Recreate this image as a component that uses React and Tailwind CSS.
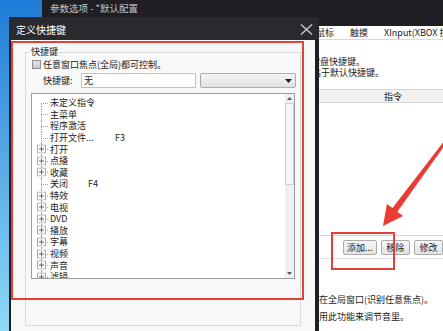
import React from "react";

/* 定义快捷键 对话框，叠在 "参数选项" 窗口上 */
const TREE = [
  { t: "未定义指令" },
  { t: "主菜单" },
  { t: "程序激活" },
  { t: "打开文件...", k: "F3", w: "w-[65px]" },
  { t: "打开", c: true },
  { t: "点播", c: true },
  { t: "收藏", c: true },
  { t: "关闭", k: "F4", w: "w-[38px]" },
  { t: "特效", c: true },
  { t: "电视", c: true },
  { t: "DVD", c: true },
  { t: "播放", c: true },
  { t: "字幕", c: true },
  { t: "视频", c: true },
  { t: "声音", c: true },
  { t: "滤镜", c: true },
];

function PlusBox() {
  return (
    <svg width="9" height="9" viewBox="0 0 9 9" className="absolute left-[5px] top-1/2 -translate-y-1/2">
      <rect x="0.5" y="0.5" width="8" height="8" fill="#fff" stroke="#a8a8a8" />
      <path d="M2 4.5h5M4.5 2v5" stroke="#666" />
    </svg>
  );
}

function WinButton({ children, w }) {
  return (
    <div
      className={`${w} h-[15px] flex items-center justify-center rounded-[2px] border border-[#acacac] bg-linear-to-b from-[#f7f7f7] to-[#e3e3e3] text-[9px] leading-none text-[#222]`}
    >
      {children}
    </div>
  );
}

export default function App() {
  return (
    <div className="relative w-[443px] h-[331px] overflow-hidden bg-linear-to-b from-[#1c7cd6] to-[#8fd9f6] font-['Noto_Sans_CJK_SC',sans-serif]">
      {/* 背后的 参数选项 窗口 */}
      <div className="absolute left-[42px] top-0 right-0 bottom-0 flex flex-col">
        <div className="h-[26px] bg-[#1e1e23] pl-[8px] pt-[2px] text-[9.5px] leading-[12px] text-[#c4c4c4]">
          参数选项 - *默认配置
        </div>
        <div className="flex-1 bg-white flex flex-col text-[9px] text-[#1a1a1a]">
          <div className="h-[14px] flex items-center gap-[16px] pl-[274px] border-b border-[#d9d9d9] leading-none whitespace-nowrap">
            <span>鼠标</span>
            <span>触摸</span>
            <span>XInput(XBOX 控制器)</span>
          </div>
          <div className="pt-[16px] leading-[11px] whitespace-nowrap">
            <p className="pl-[224px]">可以自定义键盘快捷键。</p>
            <p className="pl-[180px]">自定义的快捷键优先级高于默认快捷键。</p>
          </div>
          <div className="mt-[11px] h-[14px] bg-[#f1f1f1] border-y border-[#d6d6d6] flex items-center pl-[342px] leading-none">
            指令
          </div>
          <div className="h-[133px] border-b border-[#d8d8d8]" />
          <div className="h-[23px] flex items-center gap-[4px] pl-[301px] border-b border-[#e2e2e2]">
            <WinButton w="w-[44px]">添加...</WinButton>
            <WinButton w="w-[38px]">移除</WinButton>
            <WinButton w="w-[38px]">修改</WinButton>
          </div>
          <div className="pt-[32px] leading-[17px] whitespace-nowrap pl-[268px]">
            <p>仅在全局窗口(识别任意焦点)。</p>
            <p>启用此功能来调节音里。</p>
          </div>
        </div>
      </div>

      {/* 定义快捷键 对话框 */}
      <div className="absolute left-[9px] top-[17px] bottom-0 w-[310px] flex flex-col">
        <div className="h-[23px] bg-[#29292e] flex items-center justify-between pl-[7px] pr-[6px] pt-[2px]">
          <span className="text-[10px] leading-none text-white">定义快捷键</span>
          <svg width="13" height="11" viewBox="0 0 13 11">
            <path d="M1 0.5L12 10.5M12 0.5L1 10.5" stroke="#cfcfcf" strokeWidth="1.3" />
          </svg>
        </div>
        <div className="flex-1 bg-[#f8f8f8] border-l-2 border-r-4 border-[#1d1d22] text-[9px] text-[#1a1a1a]">
          <fieldset className="ml-[14px] mt-[6px] w-[276px] h-[280px] min-w-0 border border-[#dadada]">
            <legend className="ml-[4px] px-[1px] leading-[12px]">快捷键</legend>
            <div className="h-[12px] flex items-center pl-[6px]">
              <span className="w-[9px] h-[9px] border border-[#8f8f8f] bg-linear-to-b from-[#e2e2e2] to-[#c9c9c9]" />
              <span className="ml-[2px] leading-none">任意窗口焦点(全局)都可控制。</span>
            </div>
            <div className="mt-[3px] h-[15px] flex items-center pl-[17px]">
              <span className="w-[38px] leading-none">快捷键:</span>
              <div className="w-[115px] h-full bg-white border border-[#c4c4c4] flex items-center pl-[2px] leading-none">
                无
              </div>
              <div className="ml-[4px] w-[96px] h-full rounded-[2px] border border-[#acacac] bg-linear-to-b from-[#f4f4f4] to-[#e1e1e1] flex items-center justify-end pr-[3px]">
                <svg width="7" height="4" viewBox="0 0 7 4">
                  <path d="M0 0h7L3.5 4z" fill="#222" />
                </svg>
              </div>
            </div>
            <div className="mt-[5px] ml-[5px] w-[264px] h-[186px] border border-[#9c9c9c] bg-white flex">
              <div className="flex-1 overflow-hidden pt-[3px] text-[9px] text-[#222]">
                {TREE.map((r, i) => (
                  <div key={r.t} className="relative h-[11.6px] flex items-center">
                    <span
                      className={`absolute left-[9px] w-0 border-l border-dotted border-[#a3a3a3] ${
                        i === 0 ? "top-1/2 bottom-0" : "top-0 bottom-0"
                      }`}
                    />
                    <span className="absolute left-[9px] top-1/2 w-[7px] border-t border-dotted border-[#a3a3a3]" />
                    {r.c && <PlusBox />}
                    <span className={`pl-[18px] leading-none whitespace-nowrap ${r.k ? r.w : ""}`}>{r.t}</span>
                    {r.k && <span className="pl-[18px] leading-none">{r.k}</span>}
                  </div>
                ))}
              </div>
              <div className="w-[9px] bg-[#f0f0f0] flex flex-col">
                <div className="h-[9px] flex items-center justify-center">
                  <svg width="5" height="3" viewBox="0 0 5 3">
                    <path d="M0 3h5L2.5 0z" fill="#555" />
                  </svg>
                </div>
                <div className="h-[82px] bg-[#f7f7f7] border border-[#d0d0d0]" />
                <div className="flex-1" />
                <div className="h-[9px] flex items-center justify-center">
                  <svg width="5" height="3" viewBox="0 0 5 3">
                    <path d="M0 0h5L2.5 3z" fill="#555" />
                  </svg>
                </div>
              </div>
            </div>
          </fieldset>
        </div>
      </div>

      {/* 标注：红框与箭头 */}
      <div className="absolute left-[11px] top-[41px] w-[293px] h-[259px] border-2 border-[#e2403b]" />
      <div className="absolute left-[331px] top-[232px] w-[64px] h-[38px] border-2 border-[#e2403b]" />
      <svg className="absolute inset-0 pointer-events-none" width="443" height="331" viewBox="0 0 443 331">
        <polygon
          points="444.8,140.1 392.5,208.1 386.9,204 383,226 403,215.9 397.3,211.7 447.2,141.9"
          fill="#ea3b35"
        />
      </svg>
    </div>
  );
}
